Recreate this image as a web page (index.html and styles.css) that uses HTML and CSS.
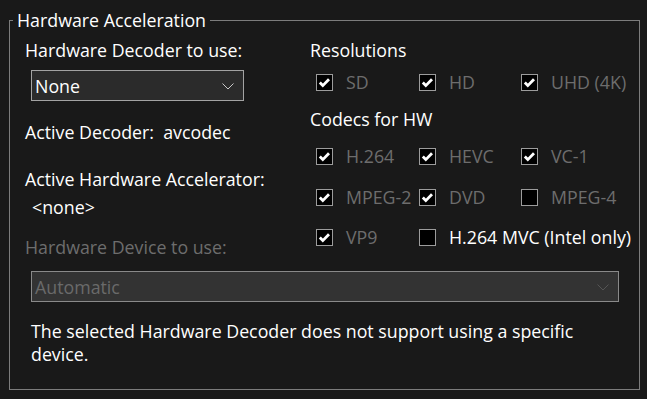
FILE: index.html
```html
<!DOCTYPE html>
<html lang="en">
<head>
    <meta charset="UTF-8">
    <title>Hardware Acceleration</title>
    <link rel="stylesheet" href="styles.css">
</head>
<body>
    <fieldset class="group">
        <legend>Hardware Acceleration</legend>
        <div class="inner">
            <!-- cột trái -->
            <div class="left">
                <div class="label">Hardware Decoder to use:</div>
                <div class="combo small">
                    <span>None</span>
                    <svg class="chev" width="12" height="7" viewBox="0 0 12 7"><path d="M0.5 0.5 L6 6 L11.5 0.5" fill="none" stroke="#c8c8c8" stroke-width="1"/></svg>
                </div>
                <div class="label active">Active Decoder:&nbsp; avcodec</div>
                <div class="label accel">Active Hardware Accelerator:</div>
                <div class="label none">&lt;none&gt;</div>
                <div class="label disabled device">Hardware Device to use:</div>
            </div>

            <!-- cột phải -->
            <div class="right">
                <div class="label">Resolutions</div>
                <div class="checks res">
                    <label class="cb on"><i></i><span>SD</span></label>
                    <label class="cb on"><i></i><span>HD</span></label>
                    <label class="cb on"><i></i><span>UHD (4K)</span></label>
                </div>
                <div class="label codecs">Codecs for HW</div>
                <div class="checks row1">
                    <label class="cb on"><i></i><span>H.264</span></label>
                    <label class="cb on"><i></i><span>HEVC</span></label>
                    <label class="cb on"><i></i><span>VC-1</span></label>
                </div>
                <div class="checks">
                    <label class="cb on"><i></i><span>MPEG-2</span></label>
                    <label class="cb on"><i></i><span>DVD</span></label>
                    <label class="cb"><i></i><span>MPEG-4</span></label>
                </div>
                <div class="checks last">
                    <label class="cb on"><i></i><span>VP9</span></label>
                    <label class="cb enabled wide"><i></i><span>H.264 MVC (Intel only)</span></label>
                </div>
            </div>

            <!-- phần dưới -->
            <div class="bottom">
                <div class="combo large">
                    <span>Automatic</span>
                    <svg class="chev" width="12" height="7" viewBox="0 0 12 7"><path d="M0.5 0.5 L6 6 L11.5 0.5" fill="none" stroke="#555" stroke-width="1"/></svg>
                </div>
                <p class="note">The selected Hardware Decoder does not support using a specific device.</p>
            </div>
        </div>
    </fieldset>
</body>
</html>
```

FILE: styles.css
```css
body {
    margin: 0;
    background: #191919;
    color: #ffffff;
    font-family: "Open Sans", "Noto Sans", sans-serif;
    font-size: 17.8px;
    width: 647px;
    height: 399px;
    overflow: hidden;
}

.group {
    margin: 10px 0 0 9px;
    padding: 0;
    width: 631px;
    height: 380px;
    box-sizing: border-box;
    border: 1px solid #7c7c7c;
    min-inline-size: 0;
}
.group legend {
    margin-left: 3px;
    padding: 0 4px;
    line-height: 20px;
}

.inner {
    display: grid;
    grid-template-columns: 285px 1fr;
    padding: 10px 0 0 15px;
}
.label {
    line-height: 20px;
    white-space: nowrap;
}
.disabled {
    color: #6d6d6d;
}

/* left column */
.left {
    display: flex;
    flex-direction: column;
}
.combo {
    position: relative;
    box-sizing: border-box;
    height: 31px;
    border: 1px solid #a3a3a3;
    background: #2b2b2b;
    display: flex;
    align-items: center;
    padding-left: 3px;
}
.combo .chev {
    position: absolute;
    right: 9px;
    top: 12px;
}
.combo.small {
    width: 213px;
    margin: 10px 0 0 6px;
}
.active { margin-top: 21px; }
.accel { margin-top: 27px; }
.none { margin: 8px 0 0 7px; }
.device { margin-top: 20px; }

/* right column */
.right {
    display: flex;
    flex-direction: column;
}
.checks {
    display: grid;
    grid-template-columns: 103px 102px 1fr;
    margin: 21px 0 0 6px;
    height: 20px;
}
.checks.res { margin-top: 10px; }
.checks.row1 { margin-top: 15px; }
.checks.last { margin-top: 20px; }
.codecs { margin-top: 19px; }

.cb {
    display: flex;
    align-items: center;
    color: #6d6d6d;
    white-space: nowrap;
}
.cb i {
    box-sizing: border-box;
    width: 17px;
    height: 17px;
    border: 1px solid #9c9c9c;
    background: #000;
    margin-right: 13px;
    flex: none;
}
.cb.on i {
    background: #000 url("data:image/svg+xml;utf8,<svg xmlns='http://www.w3.org/2000/svg' width='15' height='15' viewBox='0 0 15 15'><path d='M2.8 7.6 L5.8 10.6 L12 4.2' fill='none' stroke='white' stroke-width='2.8'/></svg>") center / 15px 15px no-repeat;
}
.cb.enabled {
    color: #ffffff;
}
.cb.wide {
    grid-column: 2 / 4;
}

/* bottom */
.bottom {
    grid-column: 1 / 3;
    margin-left: 6px;
}
.combo.large {
    width: 588px;
    margin-top: 14px;
    border-color: #8a8a8a;
    background: #333333;
    color: #6a6a6a;
}
.note {
    margin: 18px 0 0 0;
    width: 580px;
    line-height: 23px;
}
```
